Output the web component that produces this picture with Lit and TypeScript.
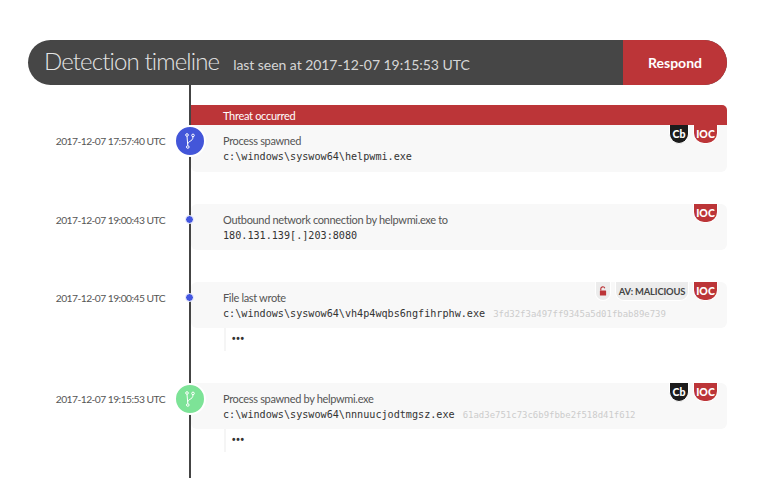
import { LitElement, html, css, nothing } from "lit";
import { customElement } from "lit/decorators.js";

type Entry = {
  time: string;
  label: string;
  value: string;
  hash?: string;
  node: "blue" | "green" | "dot";
  badges: string[];
  more?: boolean;
};

const entries: Entry[] = [
  {
    time: "2017-12-07 17:57:40 UTC",
    label: "Process spawned",
    value: "c:\\windows\\syswow64\\helpwmi.exe",
    node: "blue",
    badges: ["cb", "ioc"],
  },
  {
    time: "2017-12-07 19:00:43 UTC",
    label: "Outbound network connection by helpwmi.exe to",
    value: "180.131.139[.]203:8080",
    node: "dot",
    badges: ["ioc"],
  },
  {
    time: "2017-12-07 19:00:45 UTC",
    label: "File last wrote",
    value: "c:\\windows\\syswow64\\vh4p4wqbs6ngfihrphw.exe",
    hash: "3fd32f3a497ff9345a5d01fbab89e739",
    node: "dot",
    badges: ["lock", "av", "ioc"],
    more: true,
  },
  {
    time: "2017-12-07 19:15:53 UTC",
    label: "Process spawned by helpwmi.exe",
    value: "c:\\windows\\syswow64\\nnnuucjodtmgsz.exe",
    hash: "61ad3e751c73c6b9fbbe2f518d41f612",
    node: "green",
    badges: ["cb", "ioc"],
    more: true,
  },
];

@customElement("app-root")
export class AppRoot extends LitElement {
  static styles = css`
    :host {
      display: block;
      height: 478px;
      overflow: hidden;
      background: #fff;
      font-family: "Lato", "Open Sans", sans-serif;
      color: #555;
    }

    .page {
      padding: 40px 41px 0 28px;
    }

    .header {
      display: flex;
      align-items: stretch;
      height: 45px;
      border-radius: 23px;
      overflow: hidden;
      background: #464646;
    }

    .heading {
      flex: 1;
      display: flex;
      align-items: center;
      gap: 14px;
      padding-left: 16px;
      color: #e4e4e4;
    }

    .title {
      font-size: 24px;
      font-weight: 300;
      letter-spacing: -0.88px;
      padding-bottom: 4px;
    }

    .seen {
      font-size: 14px;
      padding-top: 3px;
      letter-spacing: -0.05px;
      color: #d6d6d6;
    }

    .respond {
      width: 104px;
      display: flex;
      align-items: center;
      justify-content: center;
      background: #bc3538;
      color: #fff;
      font-size: 14px;
      font-weight: 700;
    }

    .timeline {
      position: relative;
      padding-top: 20px;
    }

    .timeline::before {
      content: "";
      position: absolute;
      left: 161px;
      top: 0;
      width: 2px;
      height: 400px;
      background: #444;
    }

    .threat {
      margin-left: 162px;
      height: 20px;
      padding-left: 33px;
      display: flex;
      align-items: center;
      background: #bc3538;
      border-radius: 0 5px 0 0;
      color: #fff;
      font-size: 11px;
      letter-spacing: -0.3px;
    }

    .entry {
      display: grid;
      grid-template-columns: 137px 1fr;
      column-gap: 26px;
      margin-bottom: 32px;
    }

    .time {
      padding-top: 9px;
      line-height: 15px;
      font-size: 10.3px;
      letter-spacing: -0.55px;
      text-align: right;
      white-space: nowrap;
    }

    .main {
      position: relative;
    }

    .card {
      position: relative;
      height: 46px;
      box-sizing: border-box;
      padding: 8px 32px 0;
      background: #f8f8f8;
      border-radius: 6px;
    }

    .first .card {
      height: 47px;
      border-radius: 0 0 6px 6px;
    }

    .label {
      font-size: 11px;
      letter-spacing: -0.33px;
      line-height: 16px;
      white-space: nowrap;
    }

    .value {
      display: flex;
      gap: 8px;
      align-items: baseline;
      font-family: "DejaVu Sans Mono", monospace;
      font-size: 10.15px;
      line-height: 15px;
      color: #333;
      white-space: nowrap;
    }

    .hash {
      font-size: 8.97px;
      color: #ccc;
    }

    .badges {
      position: absolute;
      top: 0;
      right: 9px;
      display: flex;
      gap: 4px;
    }

    .badge {
      box-sizing: content-box;
      height: 18px;
      display: flex;
      align-items: center;
      justify-content: center;
      border: solid #fff;
      border-width: 0 1px 1px;
      border-radius: 0 0 11px 11px;
      font-size: 10.5px;
      font-weight: 900;
      white-space: nowrap;
      color: #fff;
    }

    .cb {
      width: 18px;
      background: #1c1c1c;
    }

    .ioc {
      width: 23px;
      background: #bc3538;
    }

    .av {
      width: 72px;
      background: #ececec;
      color: #444;
      font-size: 9.4px;
      font-weight: 700;
      letter-spacing: -0.15px;
      border-radius: 0 0 9px 9px;
    }

    .lock {
      width: 14px;
      background: #ececec;
    }

    .lock svg {
      display: block;
    }

    .more {
      height: 23px;
      margin-left: 33px;
      border-left: 2px solid #f5f5f5;
      padding-left: 6px;
      font-family: "Liberation Sans", sans-serif;
      font-size: 10px;
      font-weight: 700;
      letter-spacing: 0.8px;
      line-height: 21px;
      color: #333;
    }

    .node {
      position: absolute;
      left: -17px;
      top: 0;
      width: 28px;
      height: 28px;
      border: 2px solid #fff;
      border-radius: 50%;
      display: flex;
      align-items: center;
      justify-content: center;
    }

    .node.blue {
      background: #4356d9;
    }

    .node.green {
      background: #7de397;
    }

    .node.dot {
      left: -6px;
      top: 10.5px;
      width: 7px;
      height: 7px;
      border-width: 1px;
      background: #4356e0;
    }
  `;

  private badge(kind: string) {
    if (kind === "cb") return html`<span class="badge cb">Cb</span>`;
    if (kind === "ioc") return html`<span class="badge ioc">IOC</span>`;
    if (kind === "av") return html`<span class="badge av">AV: MALICIOUS</span>`;
    return html`<span class="badge lock">
      <svg width="8" height="10" viewBox="0 0 9 11">
        <path d="M2 5V3a2.3 2.3 0 0 1 4.5-.6" fill="none" stroke="#bc3538" stroke-width="1.3" />
        <rect x="1" y="5" width="7" height="5.5" rx=".6" fill="#bc3538" />
      </svg>
    </span>`;
  }

  private node(kind: Entry["node"]) {
    if (kind === "dot") return html`<span class="node dot"></span>`;
    return html`<span class="node ${kind}">
      <svg width="10" height="16" viewBox="0 0 10 16" fill="none" stroke="#fff" stroke-width="1">
        <circle cx="2" cy="2" r="1.3" />
        <circle cx="8" cy="2.4" r="1.3" />
        <circle cx="2.8" cy="14" r="1.3" />
        <path d="M2 3.3l.8 9.4M8 3.7c0 3-1.6 3.8-3 4.6-1.3.8-2.2 1.4-2.3 3" />
      </svg>
    </span>`;
  }

  render() {
    return html`
      <div class="page">
        <div class="header">
          <div class="heading">
            <span class="title">Detection timeline</span>
            <span class="seen">last seen at 2017-12-07 19:15:53 UTC</span>
          </div>
          <div class="respond">Respond</div>
        </div>
        <div class="timeline">
          <div class="threat">Threat occurred</div>
          ${entries.map(
            (e, i) => html`
              <div class="entry ${i === 0 ? "first" : ""}">
                <div class="time">${e.time}</div>
                <div class="main">
                  <div class="card">
                    <div class="label">${e.label}</div>
                    <div class="value">
                      <span>${e.value}</span>
                      ${e.hash ? html`<span class="hash">${e.hash}</span>` : nothing}
                    </div>
                    <div class="badges">${e.badges.map((b) => this.badge(b))}</div>
                  </div>
                  ${e.more ? html`<div class="more">•••</div>` : nothing}
                  ${this.node(e.node)}
                </div>
              </div>
            `
          )}
        </div>
      </div>
    `;
  }
}
